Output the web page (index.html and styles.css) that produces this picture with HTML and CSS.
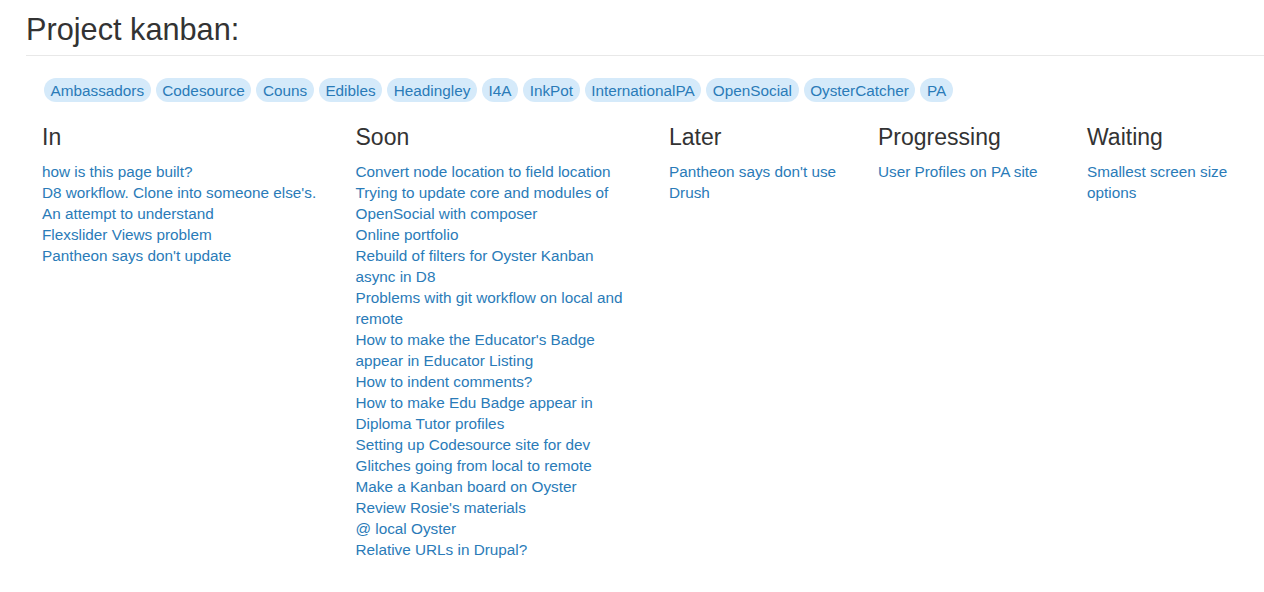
FILE: index.html
```html
<!DOCTYPE html>
<html lang="en">
<head>
<meta charset="utf-8">
<title>Project kanban</title>
<link rel="stylesheet" href="styles.css">
</head>
<body>
<div class="page">
  <header class="page-header">
    <h1 class="title">Project kanban:</h1>
  </header>
  <ul class="tags">
    <li><a class="tag" href="#">Ambassadors</a></li>
    <li><a class="tag" href="#">Codesource</a></li>
    <li><a class="tag" href="#">Couns</a></li>
    <li><a class="tag" href="#">Edibles</a></li>
    <li><a class="tag" href="#">Headingley</a></li>
    <li><a class="tag" href="#">I4A</a></li>
    <li><a class="tag" href="#">InkPot</a></li>
    <li><a class="tag" href="#">InternationalPA</a></li>
    <li><a class="tag" href="#">OpenSocial</a></li>
    <li><a class="tag" href="#">OysterCatcher</a></li>
    <li><a class="tag" href="#">PA</a></li>
  </ul>
  <div class="board">
    <section class="col">
      <h3 class="col-title">In</h3>
      <ul class="items">
        <li><a href="#">how is this page built?</a></li>
        <li><a href="#">D8 workflow. Clone into someone else's.</a></li>
        <li><a href="#">An attempt to understand</a></li>
        <li><a href="#">Flexslider Views problem</a></li>
        <li><a href="#">Pantheon says don't update</a></li>
      </ul>
    </section>
    <section class="col">
      <h3 class="col-title">Soon</h3>
      <ul class="items">
        <li><a href="#">Convert node location to field location</a></li>
        <li><a href="#">Trying to update core and modules of OpenSocial with composer</a></li>
        <li><a href="#">Online portfolio</a></li>
        <li><a href="#">Rebuild of filters for Oyster Kanban async in D8</a></li>
        <li><a href="#">Problems with git workflow on local and remote</a></li>
        <li><a href="#">How to make the Educator's Badge appear in Educator Listing</a></li>
        <li><a href="#">How to indent comments?</a></li>
        <li><a href="#">How to make Edu Badge appear in Diploma Tutor profiles</a></li>
        <li><a href="#">Setting up Codesource site for dev</a></li>
        <li><a href="#">Glitches going from local to remote</a></li>
        <li><a href="#">Make a Kanban board on Oyster</a></li>
        <li><a href="#">Review Rosie's materials</a></li>
        <li><a href="#">@ local Oyster</a></li>
        <li><a href="#">Relative URLs in Drupal?</a></li>
      </ul>
    </section>
    <section class="col">
      <h3 class="col-title">Later</h3>
      <ul class="items">
        <li><a href="#">Pantheon says don't use Drush</a></li>
      </ul>
    </section>
    <section class="col">
      <h3 class="col-title">Progressing</h3>
      <ul class="items">
        <li><a href="#">User Profiles on PA site</a></li>
      </ul>
    </section>
    <section class="col">
      <h3 class="col-title">Waiting</h3>
      <ul class="items">
        <li><a href="#">Smallest screen size options</a></li>
      </ul>
    </section>
  </div>
</div>
</body>
</html>
```

FILE: styles.css
```css
html, body {
  margin: 0;
  padding: 0;
  background: #fff;
}

body {
  font-family: "Liberation Sans", Arial, Helvetica, sans-serif;
  font-size: 15.3px;
  line-height: 21px;
  color: #333;
  overflow-x: hidden;
}

a {
  color: #2a7bb8;
  text-decoration: none;
}

.page {
  padding-left: 26px;
}

.page-header {
  padding-top: 12.5px;
  padding-bottom: 8.5px;
  border-bottom: 1px solid #e8e8e8;
}

.title {
  margin: 0;
  font-size: 30.7px;
  line-height: 34px;
  font-weight: 400;
  color: #333;
}

.tags {
  list-style: none;
  margin: 22px 0 0 18px;
  padding: 0;
  display: flex;
  flex-wrap: wrap;
  gap: 5px;
}

.tag {
  display: block;
  padding: 1.5px 6.6px;
  line-height: 21px;
  background: #d5eafa;
  border-radius: 12px;
}

.board {
  display: grid;
  grid-template-columns: 313.5px 313.5px 209px 209px 1fr;
  margin-left: 1px;
  margin-top: 22.8px;
}

.col {
  padding: 0 19px 0 15px;
  min-width: 0;
}

.col-title {
  margin: 0 0 11px;
  font-size: 23px;
  line-height: 25.3px;
  font-weight: 400;
  color: #333;
}

.items {
  list-style: none;
  margin: 0;
  padding: 0;
}

.items li {
  line-height: 21px;
}
```
